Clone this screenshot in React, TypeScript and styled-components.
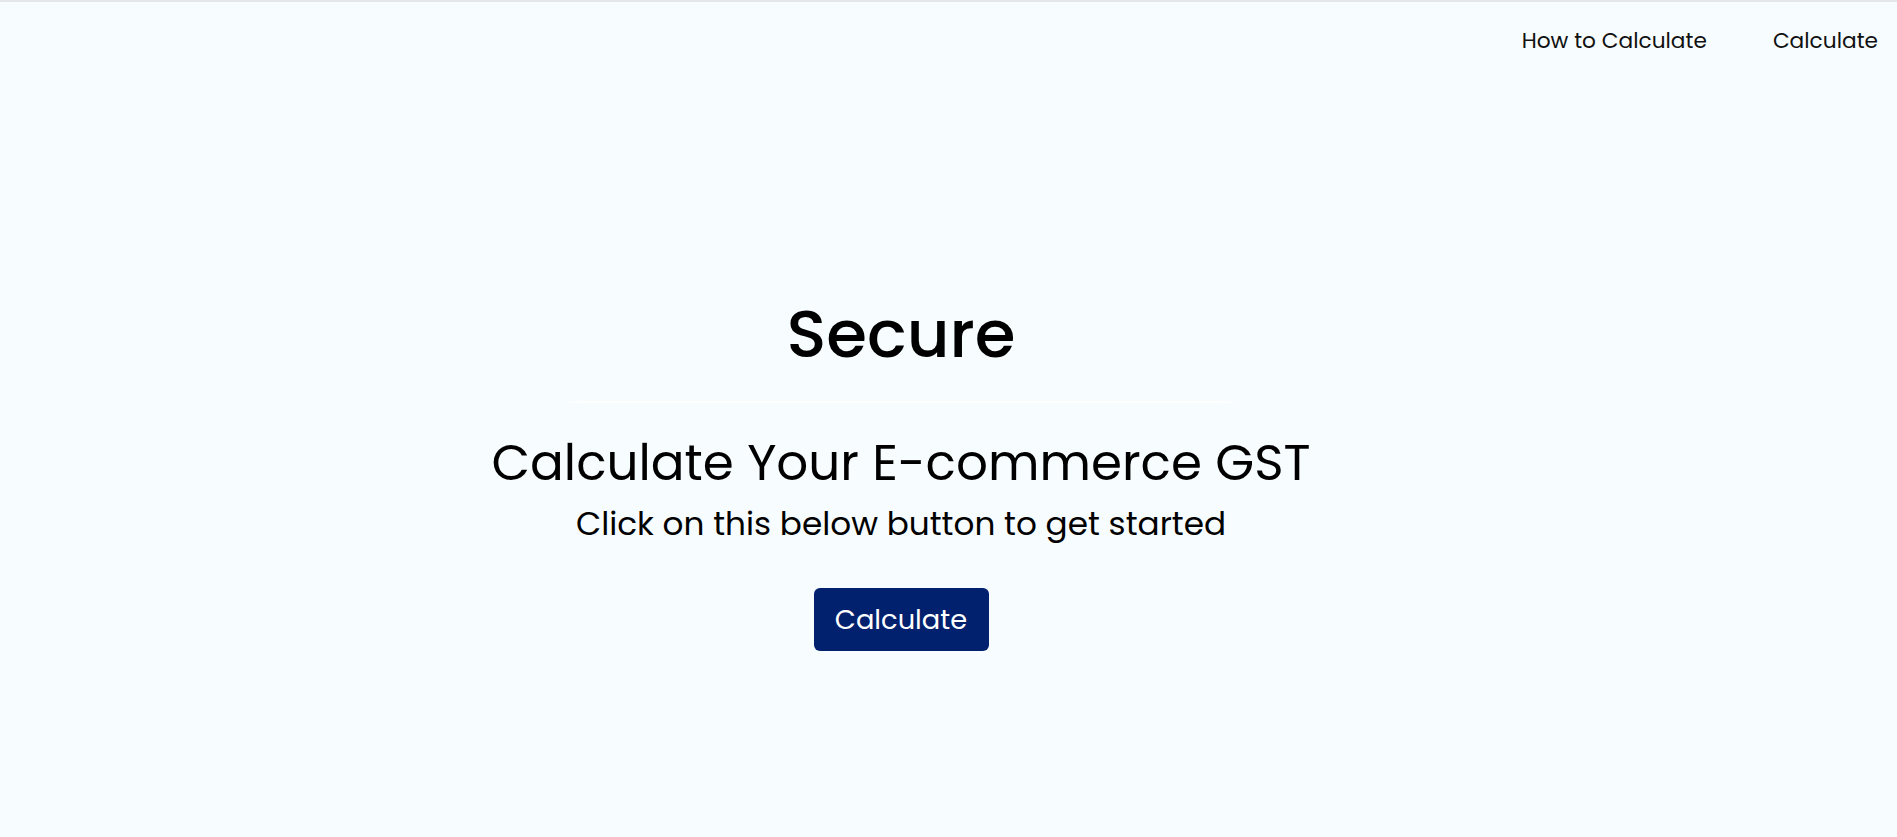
import React from "react";
import styled, { createGlobalStyle } from "styled-components";

const GlobalStyle = createGlobalStyle`
  html, body {
    margin: 0;
    padding: 0;
    background: #f7fcff;
  }
  body {
    font-family: "Poppins", "Inter", "Noto Sans", sans-serif;
    color: #000;
  }
  * { box-sizing: border-box; }
`;

const Page = styled.div`
  min-height: 100vh;
  border-top: 2px solid #e4e6e8;
  display: flex;
  flex-direction: column;
`;

const Header = styled.header`
  display: flex;
  justify-content: flex-end;
  align-items: flex-start;
  gap: 66px;
  padding: 28px 19px 0 0;
`;

const NavLink = styled.a`
  font-size: 21.7px;
  line-height: 22px;
  font-weight: 400;
  color: #111;
  text-decoration: none;
  cursor: pointer;
`;

const Main = styled.main`
  display: flex;
  flex-direction: column;
  align-items: center;
  padding-right: 95px;
  padding-top: 249px;
`;

const Title = styled.h1`
  margin: 0;
  font-size: 66px;
  line-height: 66px;
  font-weight: 500;
`;

const Divider = styled.div`
  width: 680px;
  height: 2px;
  margin-top: 34px;
  background: linear-gradient(
    90deg,
    rgba(255, 255, 255, 0) 0%,
    #ffffff 3.5%,
    #ffffff 96.5%,
    rgba(255, 255, 255, 0) 100%
  );
`;

const Heading = styled.h2`
  margin: 35px 0 0;
  font-size: 50px;
  line-height: 50px;
  font-weight: 400;
`;

const Subtitle = styled.p`
  margin: 20px 0 0;
  font-size: 32.7px;
  line-height: 32px;
  font-weight: 400;
`;

const Button = styled.button`
  margin-top: 48px;
  width: 175px;
  height: 63px;
  display: flex;
  align-items: center;
  justify-content: center;
  border: none;
  border-radius: 6px;
  background: #01206e;
  color: #fff;
  font-family: inherit;
  font-size: 27.3px;
  font-weight: 400;
  cursor: pointer;
`;

export default function App() {
  return (
    <>
      <GlobalStyle />
      <Page>
        <Header>
          <NavLink>How to Calculate</NavLink>
          <NavLink>Calculate</NavLink>
        </Header>
        <Main>
          <Title>Secure</Title>
          <Divider />
          <Heading>Calculate Your E-commerce GST</Heading>
          <Subtitle>Click on this below button to get started</Subtitle>
          <Button>Calculate</Button>
        </Main>
      </Page>
    </>
  );
}
